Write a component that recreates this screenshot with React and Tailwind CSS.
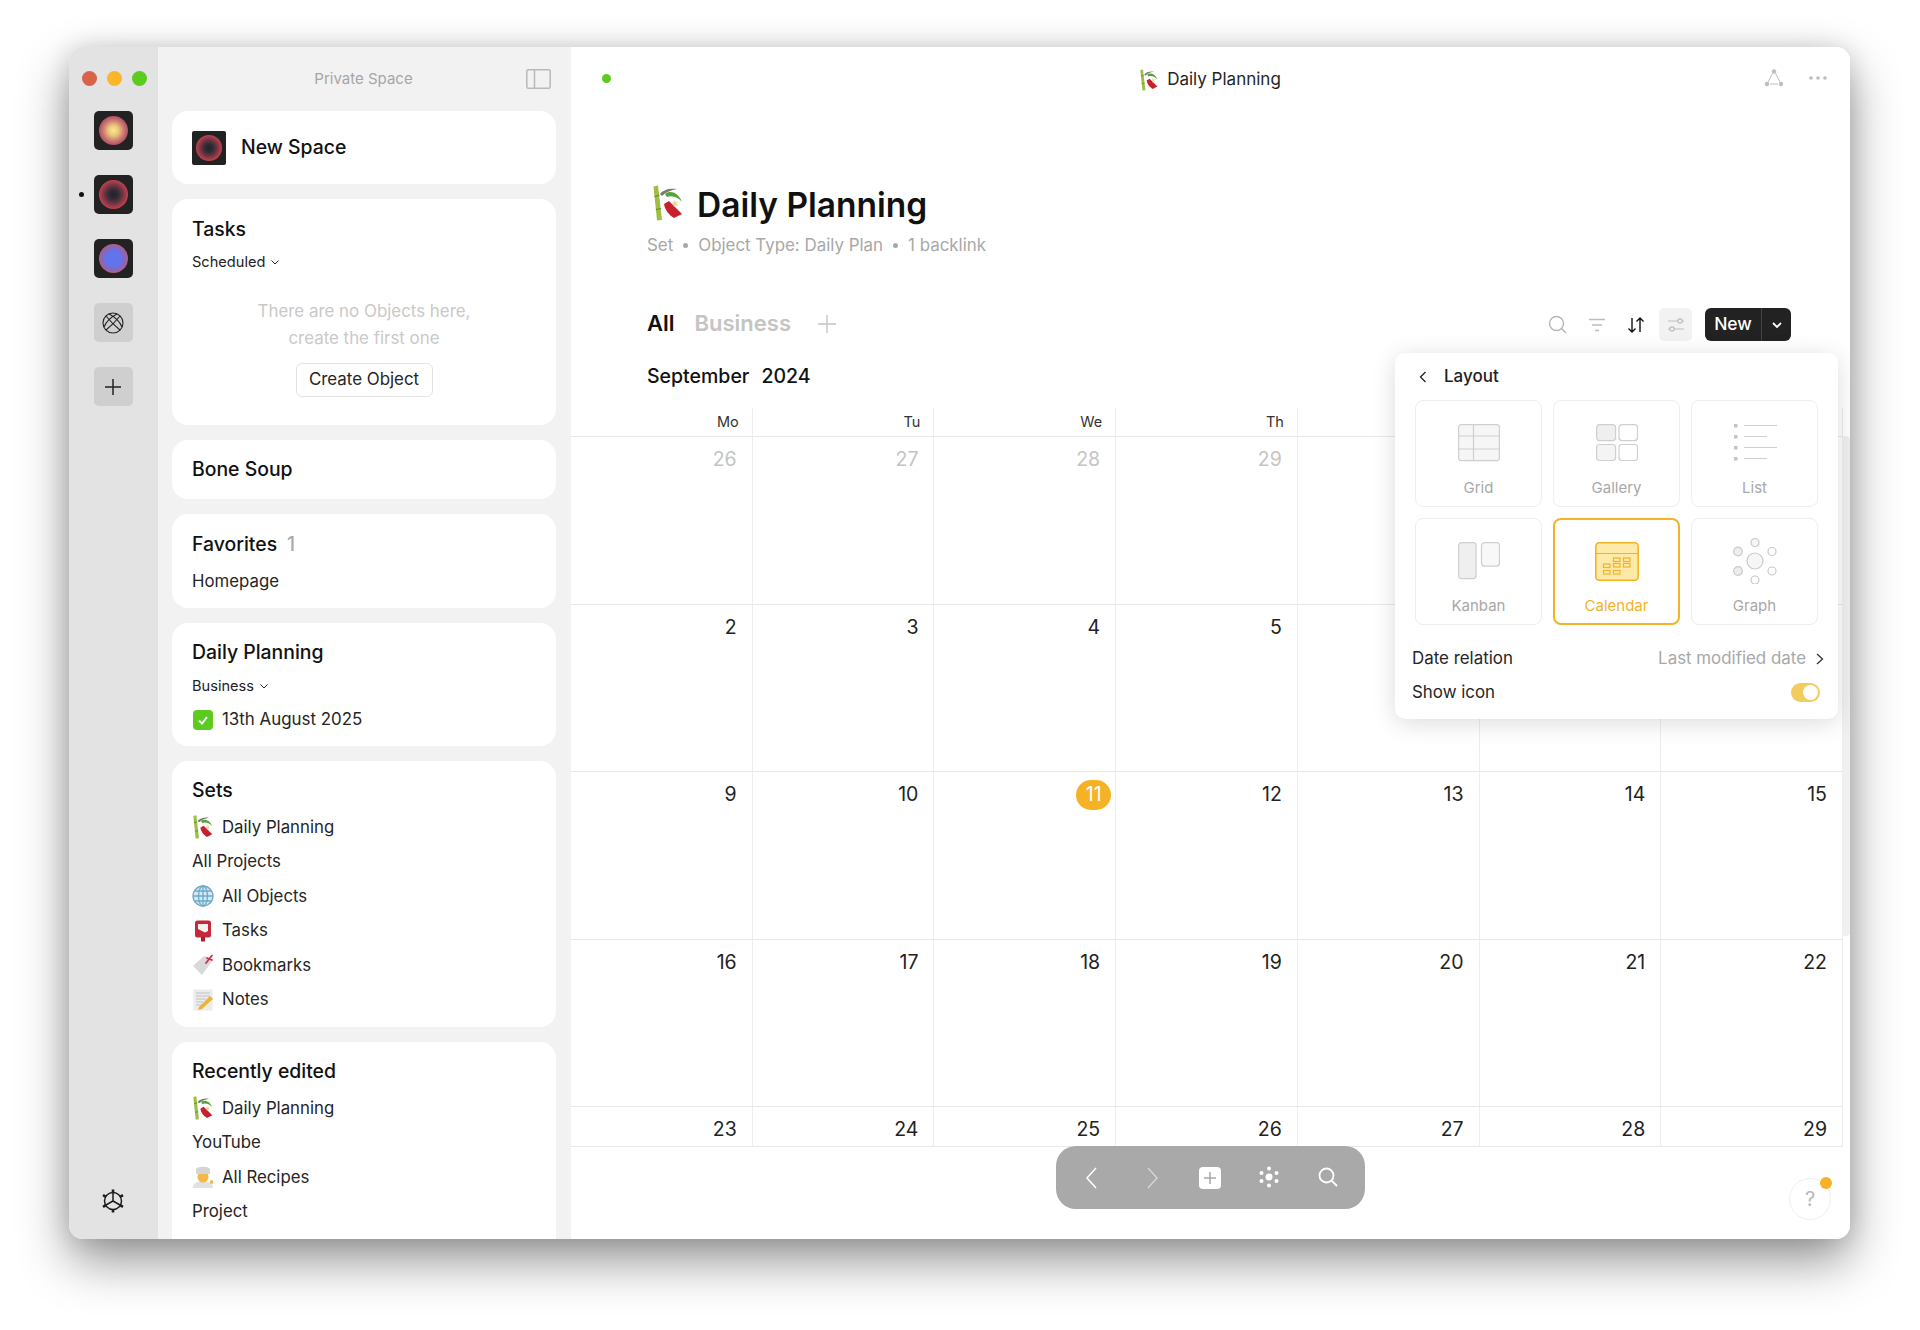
import React from "react";

const Bamboo = ({ className }) => (
  <svg viewBox="0 0 30 36" className={className}>
    <path d="M0.500 1.500L5 0.500L9 35L4 35.500Z" fill="#9dbf45" />
    <path d="M1.500 11.500L6.300 10.500M3 24.500L7.800 23.500" stroke="#5f8a22" strokeWidth="1.200" />
    <path d="M7 9C10 5 16 3 24 4C18 5 13 7 9 11Z" fill="#6f7f6a" />
    <path d="M12 9C17 5 25 7 29 17C25 12 19 10 14 12Z" fill="#55a23a" />
    <path d="M11 19L16 16L29 29L21 33C16 30 12 25 11 19Z" fill="#c8202f" />
    <path d="M21 14.500l1.300 2.300 2.700-0.400-1.300 2.200 1.300 2.300-2.700-0.400-1.300 1.900-0.500-2.800-2.300-1.300 2.300-0.900Z" fill="#e9d9a0" />
  </svg>
);
const Globe = () => (
  <svg viewBox="0 0 22 22" className="w-[22px] h-[22px]" fill="none" stroke="#6ea9cc" strokeWidth="1.300">
    <circle cx="11" cy="11" r="10" fill="#d5e8f3" />
    <ellipse cx="11" cy="11" rx="4.500" ry="10" />
    <path d="M11 1v20M1 11h20M2.500 6h17M2.500 16h17" />
  </svg>
);
const Mailbox = () => (
  <svg viewBox="0 0 22 22" className="w-[22px] h-[22px]">
    <rect x="3" y="0.500" width="16" height="17" rx="2.500" fill="#c4283c" />
    <rect x="9" y="17" width="4" height="4.500" fill="#a81f30" />
    <path d="M6 4h10v7l-3 1.500L6 9Z" fill="#f4f0ee" />
  </svg>
);
const BookmarkIc = () => (
  <svg viewBox="0 0 22 22" className="w-[22px] h-[22px]">
    <path d="M1 12L12 2L21 6L10 21Z" fill="#d9d9d9" />
    <path d="M14 9L20 1.500M15 4l5 2" stroke="#c8324a" strokeWidth="1.800" strokeLinecap="round" />
  </svg>
);
const NotesIc = () => (
  <svg viewBox="0 0 22 22" className="w-[22px] h-[22px]">
    <rect x="1.500" y="0.500" width="19" height="21" fill="#ececec" />
    <path d="M4 4h14M4 7h14M4 10h10M4 13h7M4 16h5" stroke="#b9b9b9" strokeWidth="0.800" />
    <path d="M7 18L18 7L21 10L10 20L6 21Z" fill="#e8b63a" />
  </svg>
);
const Chef = () => (
  <svg viewBox="0 0 22 22" className="w-[22px] h-[22px]">
    <path d="M1 22c0-5 4-7 10-7s10 2 10 7Z" fill="#e2e2e2" />
    <circle cx="11" cy="11" r="5.500" fill="#f2b94a" />
    <path d="M4 3c2-3 12-3 14 0v5H4Z" fill="#d5d5d5" />
    <rect x="18" y="14" width="3" height="4" rx="1.500" fill="#f2b94a" />
  </svg>
);

const SpaceIcon = ({ gradient, small }) => (
  <div className={(small ? "w-[34px] h-[34px] rounded-[2px]" : "w-[39px] h-[39px] rounded-[5px]") + " bg-[#222222] flex items-center justify-center shrink-0"}>
    <div className={(small ? "w-[26px] h-[26px] " : "w-[29px] h-[29px] ") + "rounded-full " + gradient} />
  </div>
);

const SpaceA = "bg-[radial-gradient(circle_closest-side,#fbe98e_0%,#eec57c_35%,#c97a70_72%,#b04f68_100%)]";
const SpaceB = "bg-[radial-gradient(circle_closest-side,#232328_0%,#2f2a33_30%,#6b3444_62%,#c5404c_100%)]";
const SpaceC = "bg-[radial-gradient(circle_closest-side,#5c74ef_0%,#6274ec_50%,#8068c8_75%,#b0607f_100%)]";

const Card = ({ className = "", children }) => (
  <div className={"bg-white rounded-[16px] px-5 shrink-0 " + className}>{children}</div>
);
const Chev = ({ className = "" }) => (
  <svg viewBox="0 0 10 10" className={"w-[10px] h-[10px] " + className} fill="none" stroke="currentColor" strokeWidth="1">
    <path d="M1.500 3.500L5 7l3.500-3.500" />
  </svg>
);
const Row = ({ icon, children }) => (
  <div className="h-[34.5px] flex items-center gap-2 text-[16.8px] text-[#252525]">
    {icon}
    <span>{children}</span>
  </div>
);

const tiles = [
  ["Grid", (
    <svg viewBox="0 0 42 38" className="w-[42px] h-[38px]" fill="none" stroke="#cfcfcf" strokeWidth="1.200">
      <rect x="0.600" y="0.600" width="40.800" height="36" rx="2.500" fill="#f6f6f6" />
      <path d="M15.500 0.600v36M0.600 12h41M0.600 25h41" />
    </svg>
  )],
  ["Gallery", (
    <svg viewBox="0 0 42 38" className="w-[42px] h-[38px]" fill="none" stroke="#cfcfcf" strokeWidth="1.200">
      <rect x="0.600" y="0.600" width="19" height="16" rx="3" fill="#efefef" />
      <rect x="23" y="0.600" width="18.500" height="16" rx="3" />
      <rect x="0.600" y="20.500" width="19" height="16" rx="3" fill="#f4f4f4" />
      <rect x="23" y="20.500" width="18.500" height="16" rx="3" />
    </svg>
  )],
  ["List", (
    <svg viewBox="0 0 44 38" className="w-[44px] h-[38px]" stroke="#cfcfcf" strokeWidth="1" fill="none">
      <path d="M11 1.500h33M11 12.500h23M11 23.500h33M11 34.500h23" />
      <g fill="#c4c4c4" stroke="none">
        <rect x="1" y="0" width="3.500" height="3.500" />
        <rect x="1" y="11" width="3.500" height="3.500" />
        <rect x="1" y="22" width="3.500" height="3.500" />
        <rect x="1" y="33" width="3.500" height="3.500" />
      </g>
    </svg>
  )],
  ["Kanban", (
    <svg viewBox="0 0 42 38" className="w-[42px] h-[38px]" fill="none" stroke="#cfcfcf" strokeWidth="1.200">
      <rect x="0.600" y="0.600" width="17.500" height="36" rx="3" fill="#efefef" />
      <rect x="23.500" y="0.600" width="18" height="23.500" rx="3" fill="#f8f8f8" />
    </svg>
  )],
  ["Calendar", (
    <svg viewBox="0 0 44 39" className="w-[44px] h-[39px]" fill="none" stroke="#f0b429" strokeWidth="1.200">
      <rect x="0.800" y="0.800" width="42.400" height="37.400" rx="3.500" fill="#fde9a8" strokeWidth="1.600" />
      <path d="M0.800 11.500h42.400" />
      <rect x="18.500" y="16" width="6.500" height="3.500" />
      <rect x="28.500" y="16" width="6.500" height="3.500" />
      <rect x="8.500" y="22" width="6.500" height="3.500" />
      <rect x="18.500" y="21.500" width="6.500" height="3.500" />
      <rect x="28.500" y="21.500" width="6.500" height="3.500" />
      <rect x="8.500" y="28.500" width="6.500" height="3.500" />
      <rect x="18.500" y="28.500" width="6.500" height="3.500" />
    </svg>
  )],
  ["Graph", (
    <svg viewBox="0 0 46 46" className="w-[46px] h-[46px]" fill="none" stroke="#c9c9c9" strokeWidth="1.200">
      <circle cx="23" cy="23" r="8" fill="#f6f6f6" />
      <circle cx="23" cy="4.500" r="4" fill="#f6f6f6" />
      <circle cx="23" cy="42" r="4" />
      <circle cx="6" cy="13.500" r="4.300" fill="#ededed" />
      <circle cx="40" cy="13.500" r="4" />
      <circle cx="6" cy="33" r="4.300" fill="#ededed" />
      <circle cx="40" cy="33" r="4" />
    </svg>
  )],
];

const weeks = [
  [26, 27, 28, 29, 30, 31, 1],
  [2, 3, 4, 5, 6, 7, 8],
  [9, 10, 11, 12, 13, 14, 15],
  [16, 17, 18, 19, 20, 21, 22],
  [23, 24, 25, 26, 27, 28, 29],
];
const days = ["Mo", "Tu", "We", "Th", "Fr", "Sa", "Su"];

export default function App() {
  return (
    <div className="w-[1920px] h-[1330px] bg-white pl-[69px] pt-[47px] overflow-hidden font-['Inter','Liberation_Sans',sans-serif]">
      <div className="relative w-[1781px] h-[1192px] rounded-[14px] overflow-hidden flex shadow-[0_22px_50px_rgba(0,0,0,0.42),0_0_24px_rgba(0,0,0,0.12)]">
        <div className="w-[89px] bg-[#e3e3e3] shrink-0 flex flex-col items-center pt-[24px] pb-[26px]">
          <div className="flex gap-[10px] mb-[25px] ml-[1px]">
            <div className="w-[15px] h-[15px] rounded-full bg-[#d9634a]" />
            <div className="w-[15px] h-[15px] rounded-full bg-[#fbb62a]" />
            <div className="w-[15px] h-[15px] rounded-full bg-[#5ccb1f]" />
          </div>
          <div className="flex flex-col gap-[25px] -ml-[1px]">
            <SpaceIcon gradient={SpaceA} />
            <div className="relative">
              <SpaceIcon gradient={SpaceB} />
              <div className="absolute left-[-15px] top-[17px] w-[5px] h-[5px] rounded-full bg-[#111111]" />
            </div>
            <SpaceIcon gradient={SpaceC} />
            <div className="w-[39px] h-[39px] rounded-[5px] bg-[#cfcfcf] flex items-center justify-center">
              <svg viewBox="0 0 22 22" className="w-[22px] h-[22px]" fill="none" stroke="#222222" strokeWidth="1.100">
                <circle cx="11" cy="11" r="10" />
                <path d="M4 4C8 9 13 14 18 18M18 4C14 9 9 14 4 18M7 2C13 5 18 10 20 15M15 2C9 5 4 10 2 15" />
              </svg>
            </div>
            <div className="w-[39px] h-[39px] rounded-[5px] bg-[#cfcfcf] flex items-center justify-center">
              <svg viewBox="0 0 18 18" className="w-[18px] h-[18px]" fill="none" stroke="#222222" strokeWidth="1.500">
                <path d="M9 1v16M1 9h16" />
              </svg>
            </div>
          </div>
          <div className="mt-auto -ml-[1px]">
            <svg viewBox="0 0 24 24" className="w-[24px] h-[24px]" fill="none" stroke="#1c1c1c" strokeWidth="1.500">
              <circle cx="12" cy="12" r="8.500" />
              <path d="M12 4V12L5 16M12 12l7 4" />
              <path d="M12 0.500v3M12 20.500v3M2 6.200l2.600 1.500M19.400 16.300l2.600 1.500M2 17.800l2.600-1.500M19.400 7.700l2.600-1.500" strokeWidth="2.600" />
            </svg>
          </div>
        </div>

        <div className="w-[413px] bg-[#f2f2f2] shrink-0 flex flex-col overflow-hidden">
          <div className="h-[64px] shrink-0 pl-[14px] pr-[16px] flex items-center relative">
            <div className="w-full text-center text-[15px] text-[#a6a6a6]">Private Space</div>
            <svg viewBox="0 0 25 20" className="absolute right-[20px] top-[22px] w-[25px] h-[20px]" fill="none" stroke="#b9b9b9" strokeWidth="1.500">
              <rect x="0.800" y="0.800" width="23.400" height="18.400" rx="1.500" />
              <path d="M8.500 0.800v18.400" />
            </svg>
          </div>
          <div className="flex flex-col gap-[15px] pl-[14px] pr-[15px]">
            <Card className="h-[73px] flex items-center gap-[15px]">
              <SpaceIcon gradient={SpaceB} small />
              <span className="text-[19.4px] font-medium text-[#111111]">New Space</span>
            </Card>
            <Card className="h-[226px] pt-[19px]">
              <div className="text-[19.4px] font-medium text-[#111111] leading-[22px]">Tasks</div>
              <div className="flex items-center gap-[5px] mt-[14px] text-[14.6px] text-[#222222] leading-[16px]">
                Scheduled <Chev />
              </div>
              <div className="mt-[28px] text-center text-[16.9px] text-[#c9c9c9] leading-[27px]">
                There are no Objects here,
                <br />
                create the first one
              </div>
              <div className="mt-[11px] flex justify-center">
                <div className="w-[137px] h-[34px] border border-[#e2e2e2] rounded-[6px] flex items-center justify-center text-[16.9px] text-[#252525]">
                  Create Object
                </div>
              </div>
            </Card>
            <Card className="h-[59px] flex items-center pt-[1px]">
              <span className="text-[19.4px] font-medium text-[#111111]">Bone Soup</span>
            </Card>
            <Card className="h-[94px] pt-[19px]">
              <div className="text-[19.4px] font-medium text-[#111111] leading-[22px] flex gap-[10px]">
                Favorites <span className="text-[#aaaaaa]">1</span>
              </div>
              <div className="mt-[16px] text-[16.8px] text-[#252525] leading-[20px]">Homepage</div>
            </Card>
            <Card className="h-[123px] pt-[18px]">
              <div className="text-[19.4px] font-medium text-[#111111] leading-[22px]">Daily Planning</div>
              <div className="flex items-center gap-[5px] mt-[15px] text-[14.6px] text-[#222222] leading-[16px]">
                Business <Chev />
              </div>
              <div className="flex items-center gap-[9px] mt-[13px] text-[16.9px] text-[#252525]">
                <div className="w-[20px] h-[20px] ml-[1px] rounded-[4px] bg-[#5ccb1f] flex items-center justify-center">
                  <svg viewBox="0 0 14 14" className="w-[14px] h-[14px]" fill="none" stroke="#ffffff" strokeWidth="2">
                    <path d="M3 7.500L6 10.500L11 4" />
                  </svg>
                </div>
                13th August 2025
              </div>
            </Card>
            <Card className="h-[266px] pt-[18px]">
              <div className="text-[19.4px] font-medium text-[#111111] leading-[22px] mb-[9px]">Sets</div>
              <Row icon={<Bamboo className="w-[22px] h-[24px]" />}>Daily Planning</Row>
              <Row>All Projects</Row>
              <Row icon={<Globe />}>All Objects</Row>
              <Row icon={<Mailbox />}>Tasks</Row>
              <Row icon={<BookmarkIc />}>Bookmarks</Row>
              <Row icon={<NotesIc />}>Notes</Row>
            </Card>
            <Card className="h-[260px] pt-[18px]">
              <div className="text-[19.4px] font-medium text-[#111111] leading-[22px] mb-[9px]">Recently edited</div>
              <Row icon={<Bamboo className="w-[22px] h-[24px]" />}>Daily Planning</Row>
              <Row>YouTube</Row>
              <Row icon={<Chef />}>All Recipes</Row>
              <Row>Project</Row>
            </Card>
          </div>
        </div>

        <div className="relative flex-1 bg-white flex flex-col min-w-0">
          <div className="h-[64px] shrink-0 relative flex items-center justify-center pt-[1px]">
            <div className="absolute left-[31px] top-[27px] w-[9px] h-[9px] rounded-full bg-[#5ccb1f]" />
            <div className="flex items-center gap-[9px] text-[17px] text-[#252525]">
              <Bamboo className="w-[18px] h-[22px]" />
              Daily Planning
            </div>
            <div className="absolute right-[22px] top-[21px] flex items-center gap-[24px]">
              <svg viewBox="0 0 20 20" className="w-[20px] h-[20px]" fill="none" stroke="#bdbdbd" strokeWidth="1">
                <path d="M8.500 5.500L4 14M11.500 5.500L16 14M6 16h8" />
                <g fill="#bdbdbd" stroke="none">
                  <circle cx="10" cy="3.500" r="2.200" />
                  <circle cx="3" cy="16" r="2.200" />
                  <circle cx="17" cy="16" r="2.200" />
                </g>
              </svg>
              <svg viewBox="0 0 20 20" className="w-[20px] h-[20px]" fill="#bdbdbd">
                <circle cx="3" cy="10" r="1.800" />
                <circle cx="10" cy="10" r="1.800" />
                <circle cx="17" cy="10" r="1.800" />
              </svg>
            </div>
          </div>

          <div className="pl-[82px] pt-[74px] h-[197px] shrink-0 relative">
            <div className="flex items-center gap-[14px]">
              <Bamboo className="w-[30px] h-[36px] -mt-[5px]" />
              <h1 className="text-[33.5px] font-semibold text-[#111111] leading-[40px]">Daily Planning</h1>
            </div>
            <div className="flex items-center -ml-[6px] mt-[8px] text-[16.9px] text-[#a8a8a8] leading-[24px]">
              Set
              <span className="mx-[10px] w-[5px] h-[5px] rounded-full bg-[#a8a8a8]" />
              Object Type: Daily Plan
              <span className="mx-[10px] w-[5px] h-[5px] rounded-full bg-[#a8a8a8]" />
              1 backlink
            </div>
          </div>

          <div className="h-[33px] shrink-0 pl-[76px] pr-[59px] flex items-center">
            <div className="flex items-center pb-[2px]">
              <span className="text-[22px] font-semibold text-[#111111]">All</span>
              <span className="ml-[20px] text-[22px] font-semibold text-[#c4c4c4]">Business</span>
              <svg viewBox="0 0 18 18" className="ml-[27px] w-[18px] h-[18px]" fill="none" stroke="#c4c4c4" strokeWidth="1.300">
                <path d="M9 0v18M0 9h18" />
              </svg>
            </div>
            <div className="ml-auto flex items-center">
              <svg viewBox="0 0 20 20" className="w-[20px] h-[20px] mr-[19px]" fill="none" stroke="#b5b5b5" strokeWidth="1.400">
                <circle cx="8.500" cy="8.500" r="7" />
                <path d="M13.500 13.500L18 18" />
              </svg>
              <svg viewBox="0 0 20 20" className="w-[20px] h-[20px] mr-[19px]" fill="none" stroke="#bdbdbd" strokeWidth="1.300">
                <path d="M2 4.500h16M5 10h10M8 15.500h4" />
              </svg>
              <svg viewBox="0 0 20 20" className="w-[20px] h-[20px] mr-[13px]" fill="none" stroke="#111111" strokeWidth="1.400">
                <path d="M6 3v14M2.500 13.500L6 17l3.500-3.500M14 17V3M10.500 6.500L14 3l3.500 3.500" />
              </svg>
              <div className="w-[33px] h-[33px] bg-[#f2f2f2] rounded-[5px] flex items-center justify-center mr-[13px]">
                <svg viewBox="0 0 20 20" className="w-[20px] h-[20px]" fill="none" stroke="#bdbdbd" strokeWidth="1.200">
                  <path d="M2 6h10M16 6h2M2 14h2M8 14h10" />
                  <circle cx="14" cy="6" r="2.200" />
                  <circle cx="6" cy="14" r="2.200" />
                </svg>
              </div>
              <div className="w-[86px] h-[33px] bg-[#222222] rounded-[6px] flex items-center text-white">
                <div className="w-[57px] h-full flex items-center justify-center text-[17.5px] font-medium border-r border-[#4a4040]">New</div>
                <div className="flex-1 flex items-center justify-center">
                  <svg viewBox="0 0 12 12" className="w-[12px] h-[12px]" fill="none" stroke="#ffffff" strokeWidth="1.800">
                    <path d="M2 4l4 4 4-4" />
                  </svg>
                </div>
              </div>
            </div>
          </div>

          <div className="pl-[76px] mt-[21px] h-[30px] shrink-0 flex items-center text-[19.5px] font-medium text-[#111111] gap-[12px]">
            <span>September</span>
            <span>2024</span>
          </div>

          <div className="mt-[16px] w-[1272px] h-[739px] overflow-hidden border-b border-[#e8e8e8] shrink-0">
            <div className="grid grid-cols-7 h-[29px] border-b border-[#e8e8e8]">
              {days.map((d) => (
                <div key={d} className="border-r border-[#ededed] text-right pr-[13px] pt-[5px] text-[14.5px] leading-[18px] text-[#333333]">
                  {d}
                </div>
              ))}
            </div>
            {weeks.map((w, i) => (
              <div key={i} className="grid grid-cols-7 h-[167.500px] border-b border-[#e8e8e8]">
                {w.map((n, j) => {
                  const muted = i === 0;
                  const today = i === 2 && j === 2;
                  return (
                    <div key={j} className="border-r border-[#ededed] flex justify-end pr-[15px] pt-[10px]">
                      {today ? (
                        <div className="mr-[-11px] w-[35px] h-[30px] rounded-full bg-[#f5b225] text-white text-[19.5px] flex items-center justify-center -mt-[2px]">
                          {n}
                        </div>
                      ) : (
                        <span className={"text-[19.5px] leading-[24px] " + (muted ? "text-[#c4c4c4]" : "text-[#222222]")}>{n}</span>
                      )}
                    </div>
                  );
                })}
              </div>
            ))}
          </div>

          <div className="absolute right-0 top-[389px] w-[8px] h-[500px] rounded-full bg-[#f0f0f0]" />

          <div className="absolute left-[485px] top-[1099px] w-[309px] h-[63px] rounded-[20px] bg-[#a9a9a9] flex items-center text-white">
            <svg viewBox="0 0 14 24" className="absolute left-[28px] top-[20px] w-[14px] h-[24px]" fill="none" stroke="#ffffff" strokeWidth="1.500">
              <path d="M12 2L3 12l9 10" />
            </svg>
            <svg viewBox="0 0 14 24" className="absolute left-[90px] top-[20px] w-[14px] h-[24px]" fill="none" stroke="#d4d4d4" strokeWidth="1.500">
              <path d="M2 2l9 10-9 10" />
            </svg>
            <div className="absolute left-[143px] top-[21px] w-[22px] h-[22px] rounded-[4px] bg-white flex items-center justify-center">
              <svg viewBox="0 0 14 14" className="w-[14px] h-[14px]" fill="none" stroke="#a9a9a9" strokeWidth="1.500">
                <path d="M7 1v12M1 7h12" />
              </svg>
            </div>
            <svg viewBox="0 0 22 22" className="absolute left-[202px] top-[20px] w-[22px] h-[22px]" fill="#ffffff">
              <circle cx="11" cy="11" r="3.500" />
              <circle cx="11" cy="2.500" r="2" />
              <circle cx="11" cy="19.500" r="2" />
              <circle cx="3.500" cy="7" r="2" />
              <circle cx="18.500" cy="7" r="2" />
              <circle cx="3.500" cy="15" r="2" />
              <circle cx="18.500" cy="15" r="2" />
            </svg>
            <svg viewBox="0 0 22 22" className="absolute left-[261px] top-[20px] w-[22px] h-[22px]" fill="none" stroke="#ffffff" strokeWidth="1.800">
              <circle cx="9.500" cy="9.500" r="7" />
              <path d="M14.500 14.500L20 20" />
            </svg>
          </div>

          <div className="absolute right-[19px] top-[1131px] w-[42px] h-[42px] rounded-full border border-[#efefef] bg-white flex items-center justify-center text-[20px] text-[#b9b9b9]">
            ?
          </div>
          <div className="absolute right-[18px] top-[1130px] w-[12px] h-[12px] rounded-full bg-[#f5b225]" />

          <div className="absolute left-[824px] top-[306px] w-[443px] h-[366px] bg-white rounded-[10px] shadow-[0_4px_24px_rgba(0,0,0,0.14)] px-[20px] pt-[11px]">
            <div className="flex items-center h-[26px]">
              <svg viewBox="0 0 12 14" className="w-[12px] h-[14px] ml-[2px]" fill="none" stroke="#222222" strokeWidth="1.300">
                <path d="M8.500 2L3.500 7l5 5" />
              </svg>
              <span className="ml-[15px] text-[17px] font-medium text-[#222222]">Layout</span>
            </div>
            <div className="grid grid-cols-3 gap-[11px] mt-[10px] w-[403px]">
              {tiles.map(([label, icon]) => {
                const on = label === "Calendar";
                return (
                  <div key={label} className={"h-[107px] rounded-[8px] flex flex-col items-center " + (on ? "border-2 border-[#f5b225] pt-[22px]" : "border border-[#eeeeee] pt-[23px]")}>
                    <div className="h-[38px] flex items-center justify-center shrink-0">{icon}</div>
                    <span className={"text-[15px] leading-[20px] mt-[16px] " + (on ? "text-[#f3b229]" : "text-[#a8a8a8]")}>{label}</span>
                  </div>
                );
              })}
            </div>
            <div className="flex items-center justify-between h-[34px] mt-[17px] -ml-[3px] -mr-[8px] text-[16.9px] text-[#252525]">
              <span>Date relation</span>
              <div className="flex items-center gap-[8px] text-[#a8a8a8]">
                Last modified date
                <svg viewBox="0 0 12 14" className="w-[12px] h-[14px]" fill="none" stroke="#333333" strokeWidth="1.300">
                  <path d="M3 2l5.500 5-5.500 5" />
                </svg>
              </div>
            </div>
            <div className="flex items-center justify-between h-[34px] -ml-[3px] -mr-[2px] text-[16.9px] text-[#252525]">
              <span>Show icon</span>
              <div className="w-[29px] h-[19px] rounded-full bg-[#f2cc5e] flex items-center justify-end pr-[2px] -mt-[2px]">
                <div className="w-[15px] h-[15px] rounded-full bg-white" />
              </div>
            </div>
          </div>
        </div>
      </div>
    </div>
  );
}
